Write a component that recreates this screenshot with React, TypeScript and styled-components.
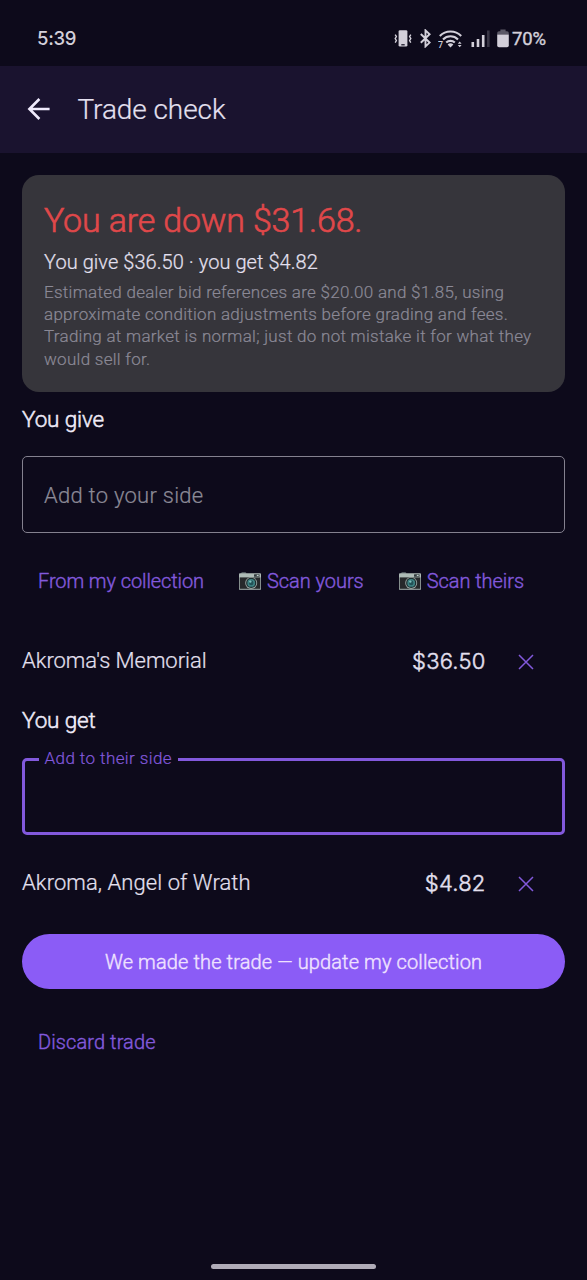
import React from "react";
import styled, { createGlobalStyle } from "styled-components";

const color = {
  page: "#0d0a1b",
  bar: "#1a132f",
  card: "#36353b",
  text: "#e4e0f0",
  muted: "#8b8996",
  accent: "#8259dc",
  fill: "#8b5cf6",
  danger: "#e0484a",
  status: "#d3d0da",
};

const textFont = `Roboto, "Liberation Sans", sans-serif`;
const numberFont = `Inter, "Liberation Sans", sans-serif`;

const GlobalStyle = createGlobalStyle`
  *, *::before, *::after { box-sizing: border-box; }
  body {
    margin: 0;
    background: ${color.page};
    color: ${color.text};
    font-family: ${textFont};
    font-weight: 300;
    -webkit-text-stroke: 0.2px currentColor;
  }
`;

const Screen = styled.div`
  display: flex;
  flex-direction: column;
  width: 587px;
  height: 1280px;
  overflow: hidden;
  background: ${color.page};
`;

const StatusBar = styled.div`
  display: flex;
  align-items: center;
  justify-content: space-between;
  flex: none;
  height: 65.5px;
  padding: 11px 40.5px 0 37px;
  color: ${color.status};
`;

const Clock = styled.span`
  font: 500 18.5px/24px ${numberFont};
  letter-spacing: -0.3px;
  -webkit-text-stroke: 0;
`;

const StatusIcons = styled.div`
  display: flex;
  align-items: center;
  gap: 7.5px;
`;

const Battery = styled.div`
  display: flex;
  align-items: center;
  gap: 3px;
`;

const BatteryText = styled.span`
  width: 34.5px;
  padding-top: 2px;
  white-space: nowrap;
  font: 400 18.5px/24px ${textFont};
  letter-spacing: -0.1px;
  -webkit-text-stroke: 0.4px currentColor;
`;

const AppBar = styled.header`
  display: flex;
  align-items: center;
  flex: none;
  gap: 26.5px;
  height: 87px;
  padding: 0 27px;
  background: ${color.bar};
`;

const BackButton = styled.button`
  display: flex;
  padding: 0;
  border: 0;
  background: none;
  color: #efeafc;
`;

const Title = styled.h1`
  margin: 1px 0 0;
  font-size: 28px;
  font-weight: 300;
  line-height: 36px;
  letter-spacing: -0.08px;
`;

const Content = styled.main`
  display: flex;
  flex-direction: column;
  padding: 22.5px 22px 0;
`;

const Summary = styled.section`
  height: 216.5px;
  padding: 23px 22px 0;
  border-radius: 17px;
  background: ${color.card};
`;

const Verdict = styled.h2`
  margin: 0;
  color: ${color.danger};
  font-size: 34px;
  font-weight: 300;
  line-height: 44px;
  letter-spacing: -0.17px;
  -webkit-text-stroke: 0.6px currentColor;
`;

const Totals = styled.p`
  margin: 6px 0 0;
  font-size: 20px;
  line-height: 28px;
  letter-spacing: 0.06px;
`;

const Note = styled.p`
  margin: 5px 0 0;
  color: ${color.muted};
  font-size: 17px;
  line-height: 22.2px;
  letter-spacing: 0.28px;
  white-space: nowrap;
`;

const SideHeading = styled.h3<{ $top: number }>`
  margin: ${(p) => p.$top}px 0 0;
  color: #efebf8;
  font-size: 22.5px;
  font-weight: 300;
  line-height: 28px;
  letter-spacing: -0.14px;
  -webkit-text-stroke: 0.5px currentColor;
`;

const Field = styled.div<{ $active?: boolean }>`
  position: relative;
  display: flex;
  align-items: center;
  height: 77px;
  margin-top: ${(p) => (p.$active ? 24 : 23)}px;
  padding: 0 ${(p) => (p.$active ? 19 : 21)}px;
  border: ${(p) => (p.$active ? `3px solid ${color.accent}` : "1.5px solid #84818f")};
  border-radius: 5px;
`;

const Placeholder = styled.span`
  padding-top: 3px;
  color: ${color.muted};
  font-size: 22px;
  line-height: 28px;
  letter-spacing: 0.26px;
`;

const FloatingLabel = styled.span`
  position: absolute;
  top: -14px;
  left: 14px;
  padding: 0 5.5px;
  background: ${color.page};
  color: ${color.accent};
  font-size: 17px;
  line-height: 22px;
  letter-spacing: 0.41px;
`;

const Actions = styled.div`
  display: flex;
  align-items: center;
  height: 56px;
  margin-top: 20px;
  padding-left: 16px;
  gap: 35px;
`;

const TextButton = styled.button<{ $spacing?: number }>`
  display: flex;
  align-items: center;
  gap: 6px;
  padding: 0;
  border: 0;
  background: none;
  color: ${color.accent};
  font: 300 20px/28px ${textFont};
  letter-spacing: ${(p) => p.$spacing ?? -0.05}px;
  white-space: nowrap;
  -webkit-text-stroke: 0.4px currentColor;
`;

const CardRow = styled.div<{ $top: number }>`
  display: flex;
  align-items: center;
  height: 56px;
  margin-top: ${(p) => p.$top}px;
  padding-right: 31px;
`;

const CardName = styled.span<{ $spacing: number }>`
  flex: 1;
  font-size: 22px;
  line-height: 28px;
  letter-spacing: ${(p) => p.$spacing}px;
`;

const Price = styled.span`
  font: 300 22px/28px ${numberFont};
  letter-spacing: 0.2px;
  -webkit-text-stroke: 0.45px currentColor;
`;

const RemoveButton = styled.button`
  display: flex;
  margin-left: 32.5px;
  padding: 2px 0 0;
  border: 0;
  background: none;
  color: ${color.accent};
`;

const PrimaryButton = styled.button`
  height: 55px;
  margin-top: 23px;
  padding: 2px 0 0;
  border: 0;
  border-radius: 28px;
  background: ${color.fill};
  color: #efe2ff;
  font: 300 20px/28px ${textFont};
  letter-spacing: 0.12px;
  -webkit-text-stroke: 0.4px currentColor;
`;

const Footer = styled.div`
  display: flex;
  margin-top: 39px;
  padding-left: 16px;
`;

const HomeIndicator = styled.div`
  width: 165px;
  height: 5px;
  margin: auto auto 11px 211px;
  border-radius: 3px;
  background: #b0acb8;
`;

const VibrateIcon = () => (
  <svg width="18" height="19" viewBox="0 0 18 19" fill="none" stroke="currentColor" strokeWidth="1.4">
    <rect x="4.6" y="1.2" width="8.8" height="16.4" rx="1.4" fill="currentColor" stroke="none" />
    <path d="M7.3 15.8h3.4" stroke={color.page} strokeWidth="1.2" />
    <path d="M1.2 5.6l1.2 2-1.2 2 1.2 2-1.2 2M16.8 5.6l-1.2 2 1.2 2-1.2 2 1.2 2" />
  </svg>
);

const BluetoothIcon = () => (
  <svg width="11" height="19" viewBox="0 0 11 19" fill="none" stroke="currentColor" strokeWidth="1.9">
    <path d="M.8 5l8.8 8.6-4.1 3.8V1.4l4.1 3.8L.8 13.8" />
  </svg>
);

const WifiIcon = () => (
  <svg width="25" height="19" viewBox="0 0 25 19" fill="none" stroke="currentColor" strokeWidth="2.1">
    <path d="M1.8 7a15 15 0 0 1 21.4 0" />
    <path d="M5 10.4a10.6 10.6 0 0 1 15 0" />
    <path d="M8.2 13.6a6.2 6.2 0 0 1 8.6 0" />
    <path d="M9.6 15.6a4.2 4.2 0 0 1 5.8 0l-2.9 3z" fill="currentColor" stroke="none" />
    <text x="0" y="18.5" fill="currentColor" stroke="none" fontFamily="Roboto" fontWeight="500" fontSize="9">7</text>
    <path d="M19.8 14.7l1.9-2.2 1.9 2.2zM19.8 16l1.9 2.2 1.9-2.2z" fill="currentColor" stroke="none" />
  </svg>
);

const SignalIcon = () => (
  <svg width="19" height="19" viewBox="0 0 19 19" fill="currentColor">
    <rect x="0.5" y="13" width="2.6" height="5" />
    <rect x="5.7" y="10" width="2.6" height="8" />
    <rect x="10.9" y="6" width="2.6" height="12" />
    <rect x="16" y="1.5" width="2.6" height="16.5" opacity="0.22" />
  </svg>
);

const BatteryIcon = () => (
  <svg width="12" height="19" viewBox="0 0 12 19" fill="currentColor">
    <path d="M3.4.6h5.2v1.6H10A1.8 1.8 0 0 1 11.8 4v1.4H.2V4A1.8 1.8 0 0 1 2 2.200h1.4z" opacity="0.4" />
    <path d="M.2 5.4h11.6v11a1.8 1.8 0 0 1-1.8 1.8H2a1.8 1.8 0 0 1-1.8-1.8z" />
  </svg>
);

const BackIcon = () => (
  <svg width="24" height="24" viewBox="0 0 24 24" fill="none" stroke="currentColor" strokeWidth="2.6">
    <path d="M12.4 2l-10 10 10 10M2.4 12h20.2" />
  </svg>
);

const CloseIcon = () => (
  <svg width="16" height="16" viewBox="0 0 16 16" fill="none" stroke="currentColor" strokeWidth="1.5">
    <path d="M1 1l14 14M15 1L1 15" />
  </svg>
);

const CameraIcon = () => (
  <svg width="22" height="18" viewBox="0 0 22 18">
    <path d="M2 1.6Q2 .4 3.2.4h3Q7.4.4 7.4 1.6z" fill="#8fa09f" />
    <rect x="0" y="1.3" width="22" height="16.5" rx=".9" fill="#aebbb7" />
    <rect x=".7" y="5.4" width="20.6" height="11.4" fill="#26282b" />
    <rect x="15" y="2.2" width="5.6" height="2.6" rx=".5" fill="#333b3f" />
    <rect x="17.8" y="2.8" width="1.8" height="1.3" fill="#c9d4d2" />
    <circle cx="12.2" cy="10.9" r="6" fill="#98a5a2" />
    <circle cx="12.2" cy="10.9" r="5.1" fill="#1c2d30" />
    <circle cx="12.2" cy="10.9" r="3.9" fill="#3d8283" />
    <circle cx="12.2" cy="10.9" r="2.3" fill="#225257" />
    <circle cx="11.3" cy="9.6" r="1.2" fill="#7fc0bd" />
  </svg>
);

export default function App() {
  return (
    <Screen>
      <GlobalStyle />
      <StatusBar>
        <Clock>5:39</Clock>
        <StatusIcons>
          <VibrateIcon />
          <BluetoothIcon />
          <WifiIcon />
          <SignalIcon />
          <Battery>
            <BatteryIcon />
            <BatteryText>70%</BatteryText>
          </Battery>
        </StatusIcons>
      </StatusBar>

      <AppBar>
        <BackButton aria-label="Back">
          <BackIcon />
        </BackButton>
        <Title>Trade check</Title>
      </AppBar>

      <Content>
        <Summary>
          <Verdict>You are down $31.68.</Verdict>
          <Totals>You give $36.50 · you get $4.82</Totals>
          <Note>
            Estimated dealer bid references are $20.00 and $1.85, using
            <br />
            approximate condition adjustments before grading and fees.
            <br />
            Trading at market is normal; just do not mistake it for what they
            <br />
            would sell for.
          </Note>
        </Summary>

        <SideHeading $top={13}>You give</SideHeading>
        <Field>
          <Placeholder>Add to your side</Placeholder>
        </Field>
        <Actions>
          <TextButton $spacing={-0.1}>From my collection</TextButton>
          <TextButton>
            <CameraIcon />
            Scan yours
          </TextButton>
          <TextButton>
            <CameraIcon />
            Scan theirs
          </TextButton>
        </Actions>
        <CardRow $top={24}>
          <CardName $spacing={-0.05}>Akroma's Memorial</CardName>
          <Price>$36.50</Price>
          <RemoveButton aria-label="Remove Akroma's Memorial">
            <CloseIcon />
          </RemoveButton>
        </CardRow>

        <SideHeading $top={17}>You get</SideHeading>
        <Field $active>
          <FloatingLabel>Add to their side</FloatingLabel>
        </Field>
        <CardRow $top={20}>
          <CardName $spacing={0.07}>Akroma, Angel of Wrath</CardName>
          <Price>$4.82</Price>
          <RemoveButton aria-label="Remove Akroma, Angel of Wrath">
            <CloseIcon />
          </RemoveButton>
        </CardRow>

        <PrimaryButton>We made the trade — update my collection</PrimaryButton>
        <Footer>
          <TextButton $spacing={0.1}>Discard trade</TextButton>
        </Footer>
      </Content>
      <HomeIndicator />
    </Screen>
  );
}
